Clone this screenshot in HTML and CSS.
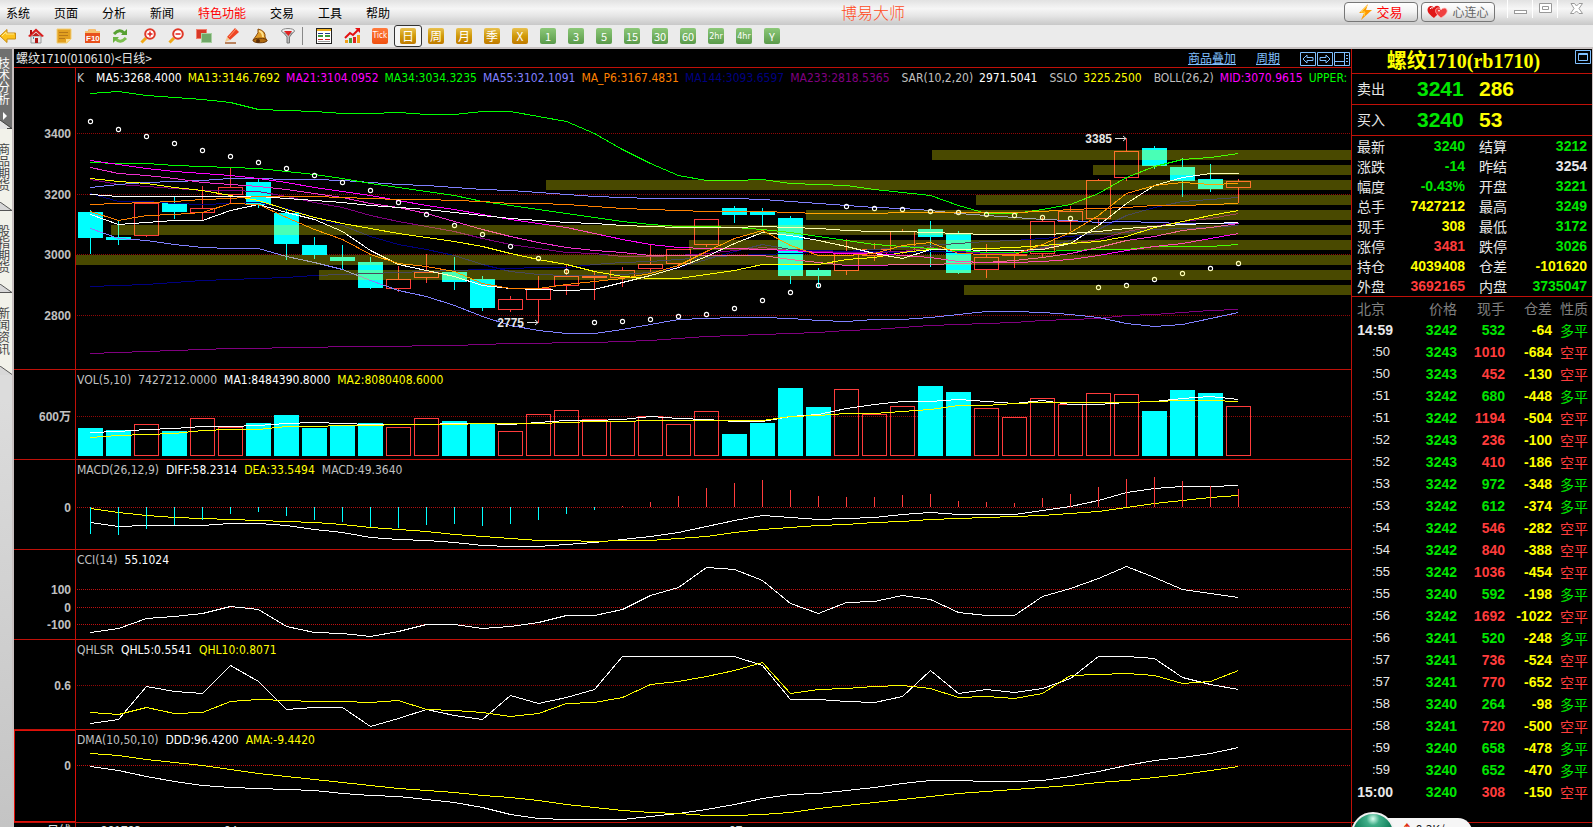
FILE: index.html
```html
<!DOCTYPE html>
<html lang="zh-CN">
<head>
<meta charset="utf-8">
<title>博易大师</title>
<link rel="stylesheet" href="styles.css">
</head>
<body>
<header class="menubar">
  <nav class="menu">
    <button>系统</button><button>页面</button><button>分析</button><button>新闻</button><button class="hot">特色功能</button><button>交易</button><button>工具</button><button>帮助</button>
  </nav>
  <h1 class="app-title">博易大师</h1>
  <div class="menu-right">
    <button class="pill trade"><svg width="13" height="16" viewBox="0 0 13 16"><path d="M9 0 0 9h5L2 16 13 6H7z" fill="#f90"/><path d="M8 2 2 8h4L5 12" fill="none" stroke="#ffd84a"/></svg>交易</button>
    <button class="pill heart"><svg width="21" height="14" viewBox="0 0 21 14"><path d="M7 13C0 8 0 5 1 3 3 0 6 1 7 3 8 0 12 0 13 3c1 4-3 7-6 10z" fill="#e01818"/><path d="M14 13C8 8 8 6 9 4c2-2 4-1 5 1 1-2 5-3 6 0 1 3-3 6-6 8z" fill="#f04040" stroke="#fbb" stroke-width=".8"/><path d="M3 4q1-2 3-1M11 6q1-1 2 0" stroke="#fff" fill="none"/></svg>心连心</button>
    <button class="win" aria-label="最小化"><svg width="13" height="12"><rect x=".5" y="7.5" width="12" height="3" fill="#fff" stroke="#999"/></svg></button>
    <button class="win" aria-label="还原"><svg width="13" height="12"><path d="M.5.5h12v9H.5zM3.5 3.500h6v3h-6z" fill="#fff" stroke="#999"/></svg></button>
    <button class="win close" aria-label="关闭"><svg width="13" height="12"><path d="M1 .5h3.500L6.500 3 9 .5h3.500L9 5.500l3.500 5H9L6.500 8 4 10.500H.5L4 5.500z" fill="#fff" stroke="#999"/></svg></button>
  </div>
</header>
<div class="toolbar">
  <button aria-label="后退"><svg width="16" height="16" viewBox="0 0 16 16"><path d="M0 8 7 1.500V5h8.500v6H7v3.500z" fill="#fcc21c" stroke="#c88a10"/><path d="M2 8l4-4v2h8" fill="none" stroke="#ffe88a"/></svg></button>
  <button aria-label="主页"><svg width="16" height="16" viewBox="0 0 16 16"><path d="M3 8h10v7H3z" fill="#e8e8e8" stroke="#999"/><path d="M0 8 8 .5 16 8l-2 1-6-5.500L2 9z" fill="#d81e1e"/><path d="M2 2h2v4H2z" fill="#b01010"/><path d="M4 8l4-3.500L12 8z" fill="#c02020"/><path d="M7 10h3v5H7z" fill="#b01818"/><path d="M5 9h1v2H5z" fill="#48a"/></svg></button>
  <button aria-label="公告"><svg width="16" height="16" viewBox="0 0 16 16"><path d="M1 1h14v10l-4 4H1z" fill="#e2a020" stroke="#f2cf78"/><path d="M3 4.500h9M3 7.500h9M3 10.500h6" stroke="#b87818"/><path d="M10 15v-4h5z" fill="#ffdf90"/></svg></button>
  <button aria-label="F10"><svg width="17" height="16" viewBox="0 0 17 16"><path d="M1 3h3l1-2h6l1 2h4v12H1z" fill="#e8501c"/><path d="M1 3h3l1-2h6l1 2h4v2H1z" fill="#f6c070"/><text x="2" y="13" class="f10">F10</text></svg></button>
  <button aria-label="刷新"><svg width="16" height="16" viewBox="0 0 16 16"><path d="M2 6q6-6 10-1" fill="none" stroke="#56a032" stroke-width="3"/><path d="M9 7h6V1z" fill="#56a032"/><path d="M14 10q-6 6-10 1" fill="none" stroke="#7cc050" stroke-width="3"/><path d="M7 9H1v6z" fill="#6cb444"/></svg></button>
  <button aria-label="放大"><svg width="16" height="16" viewBox="0 0 16 16"><path d="M1.500 14.500 6 10" stroke="#f0a818" stroke-width="3"/><circle cx="10" cy="6" r="4.800" fill="#fff" stroke="#e03828" stroke-width="2"/><path d="M7.500 6h5M10 3.500v5" stroke="#e02020" stroke-width="1.500"/></svg></button>
  <button aria-label="缩小"><svg width="16" height="16" viewBox="0 0 16 16"><path d="M1.500 14.500 6 10" stroke="#f0a818" stroke-width="3"/><circle cx="10" cy="6" r="4.800" fill="#fff" stroke="#e03828" stroke-width="2"/><path d="M7.500 6h5" stroke="#e02020" stroke-width="1.500"/></svg></button>
  <button aria-label="叠加"><svg width="16" height="16" viewBox="0 0 16 16"><rect x=".5" y="1.500" width="10" height="9" fill="#d83828" stroke="#f08070"/><rect x="5.500" y="5.500" width="10" height="9" fill="#70a868" stroke="#a8d0a0"/></svg></button>
  <button aria-label="画线"><svg width="16" height="16" viewBox="0 0 16 16"><path d="M3 9 11 0l4 4-9 8z" fill="#ee4424"/><path d="M5 9l7-8" stroke="#ff9a70"/><path d="M3 9 1 14l5-2z" fill="#f4c890"/><path d="M1 15h11" stroke="#a86030" stroke-width="1.500"/></svg></button>
  <button aria-label="预警"><svg width="16" height="16" viewBox="0 0 16 16"><path d="M6 1q8 2 7 8l2 4-14-1 3-4q3-3 2-7z" fill="#e09c28" stroke="#8a4a08"/><path d="M7 3q4 1 4 6" stroke="#ffe08a" stroke-width="2" fill="none"/><ellipse cx="8" cy="12.500" rx="7" ry="2.300" fill="#b06a10" stroke="#6a3808"/><circle cx="6" cy="13" r="2" fill="#5a2c04"/></svg></button>
  <button aria-label="筛选"><svg width="14" height="16" viewBox="0 0 14 16"><path d="M1 3 6 9v6h2.500V9L13 3z" fill="#b8b8b8" stroke="#777"/><ellipse cx="7" cy="3" rx="6.500" ry="2.500" fill="#eee" stroke="#888"/><path d="M3 3h8L7.500 8z" fill="#e02020"/></svg></button>
  <span class="divider"></span>
  <button aria-label="报价"><svg width="16" height="16" viewBox="0 0 16 16" shape-rendering="crispEdges"><rect x=".5" y=".5" width="15" height="15" fill="#fff" stroke="#222"/><path d="M1 2h14" stroke="#f0b020" stroke-width="2"/><path d="M2 5.500h5M9 5.500h5" stroke="#223a90"/><path d="M2 8h5M9 8h5" stroke="#3a9a3a" stroke-width="2"/><path d="M2 11.500h5M9 11.500h5" stroke="#d02020"/><path d="M2 13.500h12" stroke="#999"/></svg></button>
  <button aria-label="走势"><svg width="17" height="16" viewBox="0 0 17 16"><path d="M1 12h3v3H1zM13 7h3v8h-3z" fill="#f0a018"/><path d="M5 10h3v5H5z" fill="#46a038"/><path d="M9 9h3v6H9z" fill="#e02020"/><path d="M1 10 6 5l3 2 6-6" stroke="#e41010" stroke-width="2" fill="none"/><path d="M11 0h5v5z" fill="#e41010"/></svg></button>
  <button><span class="key tick">Tick</span></button>
  <button class="active"><span class="key gold">日</span></button>
  <button><span class="key gold">周</span></button>
  <button><span class="key gold">月</span></button>
  <button><span class="key gold">季</span></button>
  <button><span class="key gold">X</span></button>
  <button><span class="key green">1</span></button>
  <button><span class="key green">3</span></button>
  <button><span class="key green">5</span></button>
  <button><span class="key green">15</span></button>
  <button><span class="key green">30</span></button>
  <button><span class="key green">60</span></button>
  <button><span class="key green narrow">2hr</span></button>
  <button><span class="key green narrow">4hr</span></button>
  <button><span class="key green">Y</span></button>
</div>
<main class="main">
  <nav class="side">
    <button class="side-tab on"><span>技术分析</span><svg class="arrow" width="5" height="8"><path d="M0 0l4 4-4 4z" fill="#fff"/></svg><svg class="slant" width="12" height="9"><path d="M0 0l12 9H0z" fill="#e4e4e4"/><path d="M0 0l12 8.500H7" fill="none" stroke="#444"/></svg></button>
    <button class="side-tab"><span>商品期货</span><svg class="slant" width="12" height="9"><path d="M0 0l12 9H0z" fill="#d8d8d8"/><path d="M0 0l12 8.500H0" fill="none" stroke="#555"/></svg></button>
    <button class="side-tab"><span>股指期货</span><svg class="slant" width="12" height="9"><path d="M0 0l12 9H0z" fill="#d8d8d8"/><path d="M0 0l12 8.500H0" fill="none" stroke="#555"/></svg></button>
    <button class="side-tab"><span>新闻资讯</span><svg class="slant" width="12" height="9"><path d="M0 0l12 9H0z" fill="#d8d8d8"/><path d="M0 0l12 8.500" fill="none" stroke="#555"/></svg></button>
  </nav>
  <section class="chart">
    <div class="chart-head">
      <h2>螺纹1710(010610)&lt;日线&gt;</h2>
      <div class="chart-links">
        <a href="#overlay">商品叠加</a><a href="#period">周期</a>
        <span class="boxes">
          <button aria-label="左移"><svg width="16" height="14"><path d="M.5.5h15v13H.5z" /><path d="M3 7l4-4v2.500h6v3H7V11z"/></svg></button>
          <button aria-label="右移"><svg width="16" height="14"><path d="M.5.5h15v13H.5z"/><path d="M13 7 9 3v2.500H3v3h6V11z"/></svg></button>
          <button aria-label="布局"><svg width="16" height="14"><path d="M.5.5h15v13H.5zM10.500 0v14M0 9.500h10M12 3.500h2M12 6.500h2M12 9.500h2"/></svg></button>
        </span>
      </div>
    </div>
    <div class="panel"><svg id="price" viewBox="14 0 1337 301" preserveAspectRatio="none"></svg>
      <p class="legend dense"><span class="c-gray wide">K</span><span class="c-white">MA5:3268.4000</span><span class="c-yellow">MA13:3146.7692</span><span class="c-magenta">MA21:3104.0952</span><span class="c-green">MA34:3034.3235</span><span class="c-blue">MA55:3102.1091</span><span class="c-orange">MA_P6:3167.4831</span><span class="c-navy">MA144:3093.6597</span><span class="c-purple wide">MA233:2818.5365</span><span class="c-gray">SAR(10,2,20)</span><span class="c-white wide">2971.5041</span><span class="c-gray">SSLO</span><span class="c-yellow wide">3225.2500</span><span class="c-gray">BOLL(26,2)</span><span class="c-magenta">MID:3070.9615</span><span class="c-green">UPPER:</span></p></div>
    <div class="panel"><svg id="vol" viewBox="14 0 1337 89" preserveAspectRatio="none"></svg>
      <p class="legend"><span class="c-gray">VOL(5,10)</span><span class="c-gray">7427212.0000</span><span class="c-white">MA1:8484390.8000</span><span class="c-yellow">MA2:8080408.6000</span></p></div>
    <div class="panel"><svg id="macd" viewBox="14 0 1337 89" preserveAspectRatio="none"></svg>
      <p class="legend"><span class="c-gray">MACD(26,12,9)</span><span class="c-white">DIFF:58.2314</span><span class="c-yellow">DEA:33.5494</span><span class="c-gray">MACD:49.3640</span></p></div>
    <div class="panel"><svg id="cci" viewBox="14 0 1337 89" preserveAspectRatio="none"></svg>
      <p class="legend"><span class="c-gray">CCI(14)</span><span class="c-white">55.1024</span></p></div>
    <div class="panel"><svg id="qhl" viewBox="14 0 1337 89" preserveAspectRatio="none"></svg>
      <p class="legend"><span class="c-gray">QHLSR</span><span class="c-white">QHL5:0.5541</span><span class="c-yellow">QHL10:0.8071</span></p></div>
    <div class="panel"><svg id="dma" viewBox="14 0 1337 92" preserveAspectRatio="none"></svg>
      <p class="legend"><span class="c-gray">DMA(10,50,10)</span><span class="c-white">DDD:96.4200</span><span class="c-yellow">AMA:-9.4420</span></p></div>
    <div class="dates"><span class="cycle">日线</span><span class="d1">201703</span><span class="d2">04</span><span class="d3">07</span></div>
  </section>
  <aside class="quote">
    <div class="quote-head"><h2>螺纹1710(rb1710)</h2><button aria-label="展开"><svg width="16" height="14"><path d="M.5.5h15v13H.5zM3.500 3.500h9v7h-9zM3 4.500h10" fill="none" stroke="#80c0ff"/></svg></button></div>
    <div class="deal"><span>卖出</span><b class="g">3241</b><b class="y">286</b></div>
    <div class="deal"><span>买入</span><b class="g">3240</b><b class="y">53</b></div>
    <table class="stats">
      <tr><th>最新</th><td class="g">3240</td><th>结算</th><td class="g">3212</td></tr>
      <tr><th>涨跌</th><td class="g">-14</td><th>昨结</th><td class="w">3254</td></tr>
      <tr><th>幅度</th><td class="g">-0.43%</td><th>开盘</th><td class="g">3221</td></tr>
      <tr><th>总手</th><td class="y">7427212</td><th>最高</th><td class="g">3249</td></tr>
      <tr><th>现手</th><td class="y">308</td><th>最低</th><td class="g">3172</td></tr>
      <tr><th>涨停</th><td class="r">3481</td><th>跌停</th><td class="g">3026</td></tr>
      <tr><th>持仓</th><td class="y">4039408</td><th>仓差</th><td class="y">-101620</td></tr>
      <tr><th>外盘</th><td class="r">3692165</td><th>内盘</th><td class="g">3735047</td></tr>
    </table>
    <table class="ticks">
      <thead><tr><th>北京</th><th>价格</th><th>现手</th><th>仓差</th><th>性质</th></tr></thead>
      <tbody>
      <tr class="g"><td class="full">14:59</td><td>3242</td><td>532</td><td>-64</td><td>多平</td></tr>
      <tr class="r"><td>:50</td><td>3243</td><td>1010</td><td>-684</td><td>空平</td></tr>
      <tr class="r"><td>:50</td><td>3243</td><td>452</td><td>-130</td><td>空平</td></tr>
      <tr class="g"><td>:51</td><td>3242</td><td>680</td><td>-448</td><td>多平</td></tr>
      <tr class="r"><td>:51</td><td>3242</td><td>1194</td><td>-504</td><td>空平</td></tr>
      <tr class="r"><td>:52</td><td>3243</td><td>236</td><td>-100</td><td>空平</td></tr>
      <tr class="r"><td>:52</td><td>3243</td><td>410</td><td>-186</td><td>空平</td></tr>
      <tr class="g"><td>:53</td><td>3242</td><td>972</td><td>-348</td><td>多平</td></tr>
      <tr class="g"><td>:53</td><td>3242</td><td>612</td><td>-374</td><td>多平</td></tr>
      <tr class="r"><td>:54</td><td>3242</td><td>546</td><td>-282</td><td>空平</td></tr>
      <tr class="r"><td>:54</td><td>3242</td><td>840</td><td>-388</td><td>空平</td></tr>
      <tr class="r"><td>:55</td><td>3242</td><td>1036</td><td>-454</td><td>空平</td></tr>
      <tr class="g"><td>:55</td><td>3240</td><td>592</td><td>-198</td><td>多平</td></tr>
      <tr class="r"><td>:56</td><td>3242</td><td>1692</td><td>-1022</td><td>空平</td></tr>
      <tr class="g"><td>:56</td><td>3241</td><td>520</td><td>-248</td><td>多平</td></tr>
      <tr class="r"><td>:57</td><td>3241</td><td>736</td><td>-524</td><td>空平</td></tr>
      <tr class="r"><td>:57</td><td>3241</td><td>770</td><td>-652</td><td>空平</td></tr>
      <tr class="g"><td>:58</td><td>3240</td><td>264</td><td>-98</td><td>多平</td></tr>
      <tr class="r"><td>:58</td><td>3241</td><td>720</td><td>-500</td><td>空平</td></tr>
      <tr class="g"><td>:59</td><td>3240</td><td>658</td><td>-478</td><td>多平</td></tr>
      <tr class="g"><td>:59</td><td>3240</td><td>652</td><td>-470</td><td>多平</td></tr>
      <tr class="r"><td class="full">15:00</td><td>3240</td><td>308</td><td>-150</td><td>空平</td></tr>
      </tbody>
    </table>
    <div class="quote-foot"></div>
  </aside>
</main>
<div class="float-ball"><span class="bubble"><b>↑</b> 0.3K/s</span><span class="ball"></span></div>
<script src="chart.js"></script>
</body>
</html>
```
FILE: styles.css
```css
* { box-sizing: border-box; }
body {
  margin: 0;
  height: 100vh;
  display: flex;
  flex-direction: column;
  overflow: hidden;
  background: #000;
  color: #e8e8e8;
  font: 12px/18px "Noto Sans CJK SC", sans-serif;
}
button { margin: 0; padding: 0; border: 0; background: none; font: inherit; color: inherit; }
h1, h2, p { margin: 0; font-weight: 400; }
svg { display: block; }

.menubar {
  display: grid;
  grid-template-columns: 55fr auto 45fr;
  flex: none;
  height: 25px;
  color: #000;
  background: linear-gradient(#e2e2e2, #f6f6f6 35%, #e4e4e4 65%, #c8c8c8);
}
.menu { display: flex; gap: 24px; padding-left: 6px; line-height: 26px; white-space: nowrap; }
.menu .hot { color: #f00; }
.app-title { width: 64px; font-size: 16px; font-weight: 300; line-height: 24px; color: #ff4a1a; white-space: nowrap; }
.menu-right { display: flex; justify-content: flex-end; align-items: flex-start; }
.pill {
  display: flex; align-items: center; justify-content: center; gap: 4px;
  width: 74px; height: 20px; margin: 2px 3px 0 0;
  border: 1px solid #777; border-radius: 4px;
  background: linear-gradient(#fff, #f2f2f2 50%, #cfcfcf);
}
.trade { color: #f00; font-size: 13px; }
.heart { color: #666; }
.win { width: 25px; height: 18px; padding: 2px 6px; border-left: 1px solid #fff; }
.menu-right .heart { margin-right: 12px; }
.close { width: 36px; padding-left: 12px; }

.toolbar {
  display: flex; flex: none; height: 24px; padding-right: 6px;
  background: #ebebeb; border-bottom: 2px solid #c8c2c2;
}
.toolbar button { display: grid; place-items: center; width: 28px; height: 22px; flex: none; }
.toolbar button:first-child { width: 22px; padding-right: 6px; }
.toolbar .active { border: 1px solid #333; border-radius: 3px; background: #f6f6f6; }
.divider { width: 8px; height: 18px; margin-top: 2px; border-left: 1px solid #888; flex: none; }
.f10 { font: bold 8px "Liberation Sans", sans-serif; fill: #fff; }
.key {
  width: 16px; height: 16px; border-radius: 2px; overflow: hidden;
  color: #fff; font-size: 12px; line-height: 16px; text-align: center;
}
.gold { background: linear-gradient(#e8c050, #d09a08 50%, #c07a00); }
.green { background: linear-gradient(#8cc878, #5a9a4a); font-size: 11px; }
.narrow { font: 9px/16px "DejaVu Sans Condensed", sans-serif; }
.tick { background: linear-gradient(#ff7a3c, #f05010); font: 8px/16px "DejaVu Sans Condensed", sans-serif; }

.main { flex: 1; min-height: 0; display: flex; }
.side {
  width: 14px; flex: none; border-right: 2px solid #c8c0c0;
  background: linear-gradient(#dcdcdc, #dcdcdc 45%, #c4c4c4); overflow: hidden;
}
.side-tab {
  display: flex; flex-direction: column; align-items: flex-start;
  width: 12px; height: 82px; padding-top: 14px;
  background: #f2f2ea; color: #444; line-height: 12px;
}
.side-tab span { width: 12px; margin-left: -2px; word-break: break-all; }
.side-tab.on { height: 80px; padding-top: 8px; background: #707070; color: #fff; }
.arrow { margin: 7px 0 0 3px; }
.slant { margin-top: auto; }

.chart {
  flex: 1; min-width: 0; display: grid;
  grid-template-rows: 19px minmax(0, 302fr) repeat(4, minmax(0, 90fr)) minmax(0, 93fr) 4px;
}
.chart-head {
  display: flex; justify-content: space-between;
  padding-left: 2px; border-bottom: 1px solid #c01008; line-height: 18px;
}
.chart-head h2 { font-size: 12px; }
.chart-links { display: flex; gap: 20px; padding-right: 1px; }
.chart-links a { color: #80c0ff; }
.boxes { display: flex; gap: 1px; padding-top: 1px; }
.boxes path { fill: none; stroke: #80c0ff; }

.panel {
  display: grid; grid-template: minmax(0, 1fr) / minmax(0, 1fr);
  min-width: 0; border-bottom: 1px solid #c01008; overflow: hidden;
}
.panel svg { grid-area: 1 / 1; width: 100%; height: 100%; }
.legend {
  grid-area: 1 / 1; display: flex; gap: 7px; align-self: start;
  min-width: 0; margin-left: 63px; overflow: hidden; white-space: nowrap;
  font: 12px/21px "DejaVu Sans Condensed", sans-serif;
}
.legend.dense { gap: 6px; }
.legend .wide { margin-right: 6px; }
.c-gray { color: #c0c0c0; }
.c-white { color: #fff; }
.c-yellow { color: #ff0; }
.c-magenta { color: #f0f; }
.c-green { color: #0f0; }
.c-blue { color: #8080ff; }
.c-orange { color: #ff8000; }
.c-navy { color: #000080; }
.c-purple { color: #800080; }
.axis-text { font: bold 12px "Liberation Sans", "Noto Sans CJK SC", sans-serif; fill: #c0c0c0; text-anchor: end; }
.mark-text { font: bold 12px "Liberation Sans", sans-serif; fill: #e8e8e8; text-anchor: end; }
.dates { display: flex; overflow: hidden; line-height: 14px; color: #e0e0e0; }
.cycle { width: 62px; padding-right: 4px; text-align: right; border-right: 1px solid #c01008; }
.d1 { width: 148px; padding-left: 25px; }
.d2 { width: 505px; }

.quote {
  width: 242px; flex: none; display: flex; flex-direction: column;
  border-left: 1px solid #c01008; border-right: 1px solid #c8c0c0;
}
.quote-head { display: flex; justify-content: flex-end; height: 25px; border-bottom: 1px solid #c01008; }
.quote-head h2 {
  flex: 1; text-align: center; color: #ff0;
  font: bold 20px/24px "Liberation Serif", "Noto Sans CJK SC", serif;
}
.quote-head button { padding: 1px 1px 0 0; align-self: flex-start; }
.deal {
  display: grid; grid-template-columns: 60px 62px 1fr; height: 31px; padding-left: 5px;
  border-bottom: 1px solid #c01008; font-size: 14px; line-height: 28px;
}
.deal b { font: bold 21px/30px "Liberation Sans", sans-serif; }
.g { color: #00e600; }
.y { color: #ff0; }
.r { color: #ff3c3c; }
.w { color: #e8e8e8; }
table { border-collapse: collapse; table-layout: fixed; width: 100%; }
th, td { padding: 0; font-weight: 400; font-size: 14px; }
.stats th { width: 42px; padding-left: 5px; text-align: left; line-height: 20px; }
.stats th:nth-child(3) { padding-left: 14px; width: 50px; }
.stats td { height: 20px; text-align: right; font: bold 14px/20px "Liberation Sans", sans-serif; }
.stats td:nth-child(2) { width: 71px; }
.stats td:last-child { padding-right: 5px; }
.stats { border-bottom: 1px solid #c01008; }
.ticks th { color: #808080; text-align: right; height: 22px; line-height: 22px; }
.ticks th:first-child { width: 45px; padding-left: 5px; text-align: left; }
.ticks th:nth-child(2) { width: 60px; }
.ticks th:nth-child(3) { width: 48px; }
.ticks th:nth-child(4) { width: 47px; }
.ticks th:last-child, .ticks td:last-child { padding-right: 4px; }
.ticks td { height: 22px; text-align: right; font: bold 14px/22px "Liberation Sans", sans-serif; }
.ticks td:first-child { padding-right: 7px; color: #e8e8e8; font-weight: 400; font-size: 13px; }
.ticks td.full { padding-right: 4px; font-weight: 700; font-size: 14px; }
.ticks td:nth-child(2) { color: #00e600; }
.ticks td:nth-child(4) { color: #ff0; }
.ticks td:last-child { font: 14px/22px "Noto Sans CJK SC", sans-serif; }
.quote-foot { flex: 1; margin-bottom: 4px; border-bottom: 1px solid #c01008; }

.float-ball { position: absolute; right: 121px; bottom: -29px; width: 121px; height: 44px; }
.ball {
  position: absolute; left: 0; top: 0; width: 44px; height: 44px; border-radius: 50%;
  border: 2px solid #f0f0f0;
  background: radial-gradient(circle at 50% 12%, #d8fff0 0, #3fae88 16%, #0c7a56 50%, #086044);
}
.bubble {
  position: absolute; left: 22px; top: 6px; width: 99px; height: 32px; padding-left: 28px;
  border-radius: 14px; background: #f6f6f6; color: #222; line-height: 22px;
}
.bubble b { color: #e03010; }
```
FILE: chart.js
```js
// One bar every 28px starting at x = 90. Levels are stored in thirds of a pixel.
const STEP = 28, START = 90, RIGHT = 1351, AXIS = 75;
const NS = 'http://www.w3.org/2000/svg';
const xAt = i => START + STEP * i;

function panel(id, origin) {
  const svg = document.getElementById(id);
  const y = v => Math.round((v - origin) / 3);
  const add = (tag, attrs, text) => {
    const el = document.createElementNS(NS, tag);
    for (const k in attrs) el.setAttribute(k, attrs[k]);
    if (text) el.textContent = text;
    svg.appendChild(el);
    return el;
  };
  const api = {
    y, add,
    rule(x1, y1, x2, y2, color, dash) {
      add('line', { x1, y1, x2, y2, stroke: color, 'shape-rendering': 'crispEdges', ...(dash && { 'stroke-dasharray': dash }) });
    },
    grid(v, label, color) {
      const gy = y(v);
      api.rule(77, gy + 0.5, RIGHT, gy + 0.5, color, '1 1');
      if (label) add('text', { x: 71, y: gy + 5, class: 'axis-text' }, label);
    },
    series(values, color) {
      const points = values.map((v, i) => `${xAt(i) + 0.5},${y(v) + 0.5}`).join(' ');
      add('polyline', { points, fill: 'none', stroke: color, 'shape-rendering': 'crispEdges' });
    },
    bar(i, top, bottom, down) {
      const t = y(top), h = Math.max(y(bottom) - t, 2);
      if (down) add('rect', { x: xAt(i) - 12, y: t, width: 25, height: h, fill: '#0ff' });
      else add('rect', { x: xAt(i) - 11.5, y: t + 0.5, width: 24, height: h - 1, fill: 'none', stroke: '#ff3c3c' });
    },
    frame() { api.rule(AXIS + 0.5, 0, AXIS + 0.5, 400, '#c01008'); }
  };
  return api;
}

// [down, open/close top, open/close bottom, high, low]
const candles = [
  [1,456,534,450,582],[1,531,540,481,555],[0,429,528,426,531],[1,429,456,410,477],[0,444,459,378,480],[0,381,404,322,430],
  [1,366,436,356,443],[1,459,552,450,600],[1,555,585,531,597],[1,591,603,555,628],[1,606,684,591,687],[0,657,687,618,696],
  [0,636,654,582,669],[1,636,666,590,690],[1,657,744,648,753],[0,717,750,708,756],[0,685,719,648,789],[0,649,678,615,706],
  [0,648,654,634,720],[0,630,654,621,682],[0,613,627,551,640],[0,568,612,568,620],[0,477,555,477,561],[1,444,465,438,489],
  [1,456,465,444,499],[1,474,648,468,672],[1,630,648,624,680],[0,580,633,537,645],[0,567,588,550,603],[0,514,575,508,582],
  [1,507,531,483,621],[1,522,639,514,642],[0,591,630,552,655],[0,582,588,570,624],[0,483,582,472,592],[0,454,486,438,513],
  [0,360,477,357,496],[0,273,354,235,363],[1,264,318,258,327],[1,321,363,294,411],[1,357,387,312,396],[0,363,384,357,430]
];

const p = panel('price', 24);
p.grid(220, '3400', '#900808');
p.grid(403, '3200', '#900808');
p.grid(583, '3000', '#900808');
p.grid(766, '2800', '#900808');
candles.forEach(([down, top, bottom, high, low], i) => {
  const color = down ? '#0ff' : '#ff3c3c', cx = xAt(i) + 0.5;
  p.rule(cx, p.y(high), cx, p.y(top), color);
  p.rule(cx, p.y(bottom), cx, p.y(low), color);
  p.bar(i, top, bottom, down);
});
// MA233, MA144
p.series([880,877,874,871,868,865,865,862,861,859,858,857,856,854,853,850,848,847,845,842,839,833,829,826,821,818,815,811,806,802,796,793,790,787,781,778,773,766,761,757,751,748], '#800080');
p.series([677,674,671,666,661,658,655,652,646,643,640,637,634,630,628,625,622,620,612,607,604,598,592,586,582,580,577,574,568,562,555,550,543,539,535,528,520,515,508,503,500,495], '#000080');
p.series([400,424,424,430,433,430,427,445,470,496,529,553,568,586,613,634,643,645,646,643,636,622,598,574,553,567,571,573,573,577,573,575,578,578,560,541,508,466,440,424,418,410], '#000080');
p.series([358,373,378,384,391,391,394,409,427,442,466,484,499,514,535,553,565,575,580,587,589,584,578,570,562,570,573,577,577,574,560,572,578,578,565,550,536,514,499,483,475,460], '#800080');
// MA55, MA34, MA21, MA13
p.series([380,372,367,362,361,355,355,358,358,361,367,373,376,382,388,391,397,403,409,412,413,415,415,415,418,424,430,436,441,444,451,460,466,472,478,481,485,484,487,488,489,490], '#8080ff');
p.series([307,310,310,314,319,322,325,334,343,355,370,382,394,406,423,435,447,459,472,482,493,498,499,501,508,516,528,541,551,557,563,569,575,575,574,571,568,566,559,559,559,553], '#0f0');
p.series([322,340,346,355,367,372,378,388,400,412,428,442,458,484,508,529,547,562,569,577,586,585,585,585,586,598,606,616,616,613,611,610,605,600,592,580,562,541,528,511,502,490], '#f030d0');
p.series([355,363,368,382,391,406,421,446,472,490,505,519,532,544,559,580,598,613,634,649,655,655,643,629,613,613,613,598,590,576,566,566,563,560,555,550,544,529,502,482,465,451], '#ff0');
// BOLL upper, middle, lower
p.series([100,94,106,112,118,127,148,149,154,160,160,157,163,163,154,154,169,184,220,268,310,346,361,361,358,370,373,376,388,397,406,436,459,460,448,433,400,352,318,298,292,280], '#0f0');
p.series([301,313,325,334,340,346,355,367,380,392,406,421,436,448,463,476,490,502,520,538,551,562,565,565,566,571,577,580,580,586,590,602,606,607,604,598,585,571,559,548,535,520], '#f0f');
p.series([505,535,541,553,562,565,565,587,607,628,661,691,709,734,769,796,811,820,820,806,793,778,773,772,772,775,781,784,778,778,771,762,754,754,757,763,772,790,799,793,775,757], '#8080ff');
// long average pair
p.series([403,407,409,409,409,409,409,413,420,427,436,442,448,455,466,473,480,487,490,496,499,501,502,500,499,502,504,510,512,512,516,520,522,523,521,518,514,505,499,493,490,487], '#fff');
p.series([431,428,425,422,418,413,409,409,409,412,415,418,418,421,424,428,430,433,439,443,446,451,452,453,454,457,460,460,460,457,457,457,457,455,454,448,445,442,436,434,432,430], '#ff8000');
// MA5, MA_P6
p.series([463,493,485,481,481,451,432,455,476,512,571,613,631,649,676,685,688,691,688,665,646,622,587,549,517,525,541,559,578,593,566,566,570,571,567,550,496,430,376,352,340,340], '#fff');
p.series([454,481,466,461,457,430,432,470,508,538,583,610,619,632,670,685,685,673,662,655,640,614,572,534,511,556,586,586,580,556,547,580,582,582,551,516,466,400,374,367,373,370], '#ff8000');
// SAR
[184,208,229,250,271,289,307,325,346,367,391,427,463,496,523,559,595,634,787,784,778,769,763,745,721,697,676,439,445,448,454,457,463,466,472,475,682,676,658,640,625,610]
  .forEach((v, i) => p.add('circle', { cx: xAt(i) + 0.5, cy: p.y(v) + 0.5, r: 2.1, fill: 'none', stroke: '#fff', 'stroke-width': 1.1 }));
// price density bands
[[932,270],[1093,315],[546,360],[976,405],[806,450],[111,495],[689,540],[76,585],[319,630],[964,675]]
  .forEach(([x, v]) => p.add('rect', { x, y: p.y(v), width: RIGHT - x, height: 10, fill: '#ff0', 'fill-opacity': 0.285 }));
[[1112, 235, '3385', 1126], [524, 787, '2775', 538]].forEach(([x, v, label, tip]) => {
  const ty = p.y(v);
  p.add('text', { x, y: ty + 5, class: 'mark-text' }, label);
  p.add('path', { d: `M${x + 3} ${ty + 0.5}H${tip}M${tip - 3} ${ty - 2}l3 2.500l-3 2.500`, fill: 'none', stroke: '#e0e0e0' });
});
p.frame();

const v = panel('vol', 0);
v.grid(139, '600万', '#900808');
[174,180,162,183,144,171,159,135,174,166,160,171,144,153,160,183,132,120,147,153,138,162,123,192,159,54,111,57,132,108,48,66,114,141,84,102,69,72,123,60,69,108]
  .forEach((top, i) => v.bar(i, top, 258, candles[i][0]));
v.series([187,184,178,175,169,169,166,160,157,160,161,163,163,160,160,163,157,151,151,148,139,145,147,154,154,139,131,115,103,94,94,86,94,98,91,103,103,95,92,85,79,88], '#fff');
v.series([202,196,193,190,181,178,176,169,167,166,166,163,163,161,160,160,160,157,154,154,151,151,149,151,151,139,136,130,130,124,116,106,106,100,95,97,95,95,94,91,91,94], '#ff0');
v.frame();

const m = panel('macd', 270);
m.grid(412, '0', '#b01010');
m.series([457,469,466,466,466,458,458,466,478,487,502,508,511,517,526,529,529,523,517,508,499,487,469,451,436,442,448,445,442,433,427,433,433,433,421,409,391,367,355,349,349,346], '#fff');
m.series([415,427,436,442,445,448,451,454,457,463,472,478,484,493,499,505,511,511,514,511,511,505,499,487,478,472,466,463,457,454,448,445,442,439,436,430,424,412,400,391,382,374], '#ff0');
[492,495,477,466,450,432,426,438,450,456,471,474,465,462,468,462,450,432,420,408,396,378,354,339,330,360,378,381,381,375,372,393,396,399,384,372,351,327,321,333,348,357]
  .forEach((end, i) => m.rule(xAt(i) + 0.5, m.y(412), xAt(i) + 0.5, m.y(end), end > 412 ? '#0ff' : '#ff3c3c'));
m.frame();

const c = panel('cci', 540);
c.grid(658, '100', '#c01010');
c.grid(712, '0', '#c01010');
c.grid(763, '-100', '#c01010');
c.series([787,775,745,739,730,709,718,769,787,790,799,784,763,763,775,769,757,736,736,718,676,650,592,598,631,700,730,697,694,676,688,727,736,736,679,653,625,589,622,658,670,682], '#fff');
c.frame();

const q = panel('qhl', 810);
q.grid(946, '0.6', '#900808');
q.series([1060,1048,949,964,970,886,934,1018,1012,1012,1069,1045,1018,1036,1048,976,1000,982,958,859,859,859,859,859,886,988,988,994,997,979,901,970,958,967,955,925,859,859,865,922,943,958], '#fff');
q.series([1027,1033,1012,1030,1027,994,988,991,994,994,997,991,1018,1021,1027,1039,1030,1000,997,982,943,934,919,901,877,970,958,955,949,946,955,982,979,985,970,916,913,910,916,940,934,901], '#ff0');
q.frame();

const d = panel('dma', 0);
d.grid(106, '0', '#c01010');
d.series([109,121,137,154,166,172,175,178,181,190,196,199,208,217,232,253,265,268,268,268,259,250,238,223,205,193,188,181,172,160,149,150,154,154,151,139,122,105,90,80,68,50], '#fff');
d.series([70,76,86,97,106,117,129,139,147,157,166,175,181,187,195,202,211,221,230,239,246,250,254,254,251,245,234,224,215,206,197,190,184,178,172,164,157,150,142,131,119,108], '#ff0');
d.frame();
d.add('rect', { x: 14.5, y: 0.5, width: 61, height: 91, fill: 'none', stroke: '#e01008' });
```
